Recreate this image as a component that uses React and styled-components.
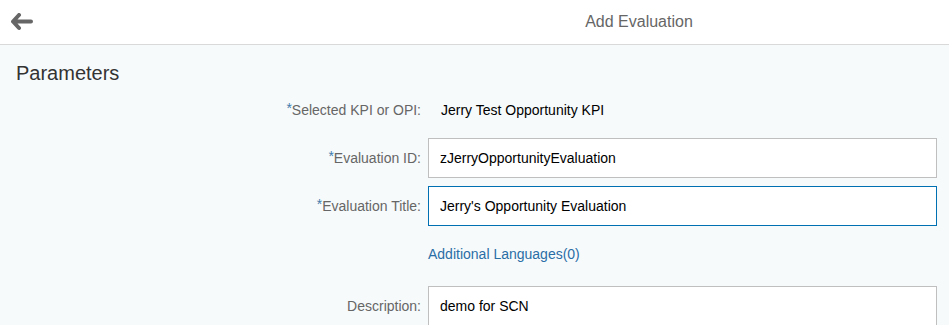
import React from 'react'
import styled, { createGlobalStyle } from 'styled-components'

const GlobalStyle = createGlobalStyle`
  html, body {
    margin: 0;
    padding: 0;
    background: #f7fafb;
    font-family: "Liberation Sans", Arial, sans-serif;
    overflow: hidden;
  }
`

const Page = styled.div`
  width: 949px;
  height: 325px;
  overflow: hidden;
`

const Header = styled.header`
  display: grid;
  grid-template-columns: 44px 1190px;
  align-items: center;
  height: 44px;
  background: #ffffff;
  border-bottom: 1px solid #d9d9d9;
`

const BackButton = styled.button`
  display: flex;
  align-items: center;
  justify-content: center;
  width: 44px;
  height: 44px;
  padding: 0 0 0 2px;
  border: none;
  background: transparent;
  cursor: pointer;
`

const Title = styled.h1`
  margin: 0;
  text-align: center;
  font-size: 16px;
  font-weight: normal;
  color: #666666;
`

const Content = styled.main`
  padding: 16px 12px 0 16px;
`

const SectionTitle = styled.h2`
  margin: 0 0 4px;
  font-size: 20px;
  font-weight: normal;
  line-height: 25px;
  color: #333333;
`

const Form = styled.div`
  display: grid;
  grid-template-columns: 405px 1fr;
  column-gap: 7px;
  row-gap: 8px;
`

const Label = styled.label`
  display: flex;
  align-items: center;
  justify-content: flex-end;
  height: 40px;
  font-size: 14px;
  color: #666666;
`

const Required = styled.span`
  color: #427cac;
  font-size: 14px;
  align-self: flex-start;
  margin-top: 10px;
`

const Value = styled.div`
  display: flex;
  align-items: center;
  height: 40px;
  padding-left: 13px;
  font-size: 14px;
  color: #000000;
`

const Input = styled.input`
  box-sizing: border-box;
  width: 100%;
  height: 40px;
  padding: 0 11px;
  border: 1px solid ${p => (p.$focused ? '#0070b2' : '#bfbfbf')};
  background: #ffffff;
  font-family: "Liberation Sans", Arial, sans-serif;
  font-size: 14px;
  color: #000000;
  outline: none;
`

const LinkCell = styled.div`
  display: flex;
  align-items: center;
  height: 40px;
  margin-bottom: 4px;
`

const Link = styled.a`
  font-size: 14px;
  color: #2a6ea6;
  text-decoration: none;
`

const BackIcon = () => (
  <svg width="24" height="18" viewBox="0 0 24 18">
    <path
      d="M8 2 L2 8.5 L8 15 M3 8.5 H20"
      fill="none"
      stroke="#666666"
      strokeWidth="4"
      strokeLinecap="round"
      strokeLinejoin="round"
    />
  </svg>
)

const fields = [
  { label: 'Evaluation ID', value: 'zJerryOpportunityEvaluation', required: true },
  { label: 'Evaluation Title', value: "Jerry's Opportunity Evaluation", required: true, focused: true },
]

const App = () => (
  <Page>
    <GlobalStyle />
    <Header>
      <BackButton aria-label="Back">
        <BackIcon />
      </BackButton>
      <Title>Add Evaluation</Title>
    </Header>
    <Content>
      <SectionTitle>Parameters</SectionTitle>
      <Form>
        <Label>
          <Required>*</Required>Selected KPI or OPI:
        </Label>
        <Value>Jerry Test Opportunity KPI</Value>

        {fields.map(f => (
          <React.Fragment key={f.label}>
            <Label>
              {f.required && <Required>*</Required>}
              {f.label}:
            </Label>
            <Input defaultValue={f.value} $focused={f.focused} />
          </React.Fragment>
        ))}

        <div />
        <LinkCell>
          <Link href="#">Additional Languages(0)</Link>
        </LinkCell>

        <Label>Description:</Label>
        <Input defaultValue="demo for SCN" />
      </Form>
    </Content>
  </Page>
)

export default App
